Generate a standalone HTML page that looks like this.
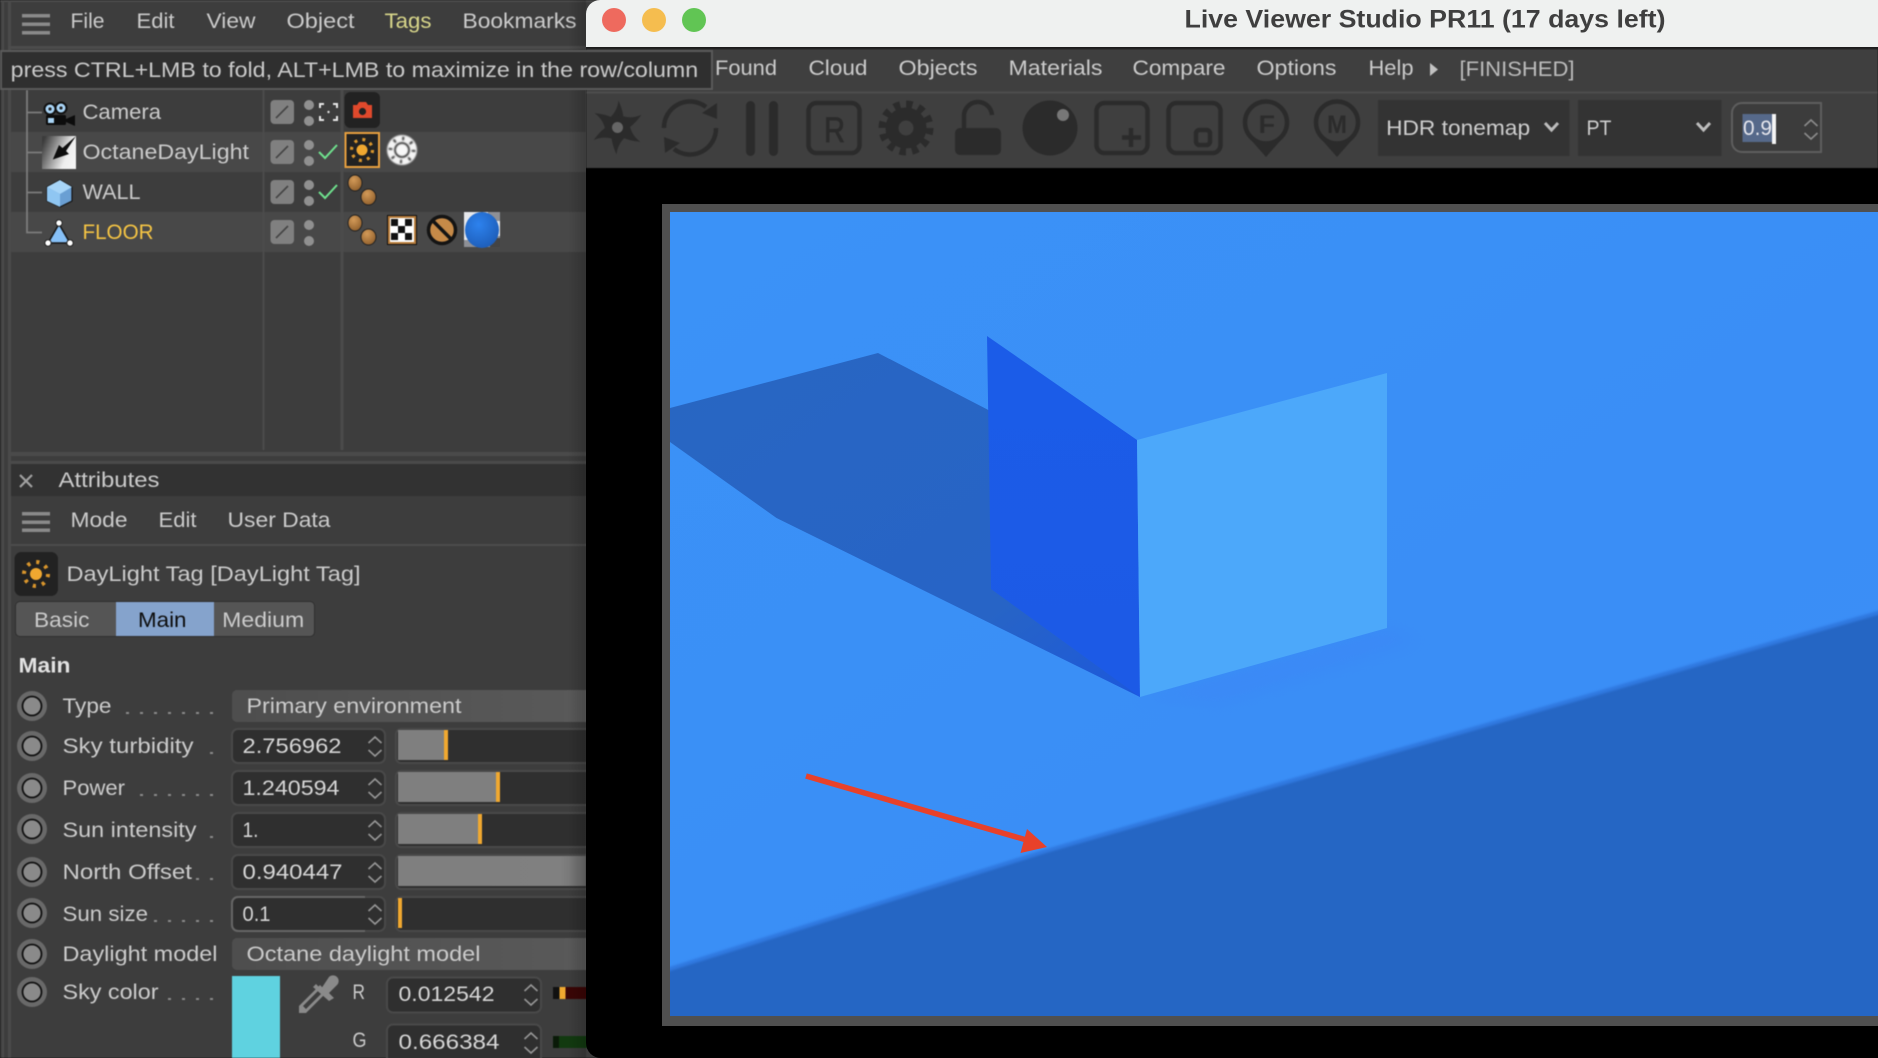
<!DOCTYPE html>
<html><head><meta charset="utf-8"><title>Live Viewer Studio</title>
<style>
html,body{margin:0;padding:0;background:#000;width:1878px;height:1058px;overflow:hidden}
svg{display:block;position:absolute;left:0;top:0}
text{font-family:"Liberation Sans",sans-serif;font-size:21px;fill:#cbcbcb;transform:translateX(-.5px)}
text.n{transform:none}
.b{filter:blur(.4px)}
.v{fill:#d6d6d6}
.sp{fill:none;stroke:#969696;stroke-width:1.6}
.dot{fill:#8a8a8a}
.tick{fill:#f0a830}
.ic{fill:#2b2b2b}
.ics{fill:none;stroke:#2b2b2b;stroke-width:4.5}
</style></head><body>
<svg width="1878" height="1058" viewBox="0 0 1878 1058" xmlns="http://www.w3.org/2000/svg">
<defs>
<linearGradient id="bg" x1="0" y1="0" x2="1" y2="1"><stop offset="0" stop-color="#3b92f7"/><stop offset=".6" stop-color="#3a8ef6"/><stop offset="1" stop-color="#3c8df6"/></linearGradient>
<linearGradient id="dd" x1="0" y1="0" x2="1" y2="0"><stop offset="0" stop-color="#4e4e4e"/><stop offset="1" stop-color="#5a5a5a"/></linearGradient>
<linearGradient id="oc" x1="0" y1=".25" x2="1" y2=".65"><stop offset="0" stop-color="#3c3c3c"/><stop offset=".75" stop-color="#eeeeee"/><stop offset="1" stop-color="#f4f4f4"/></linearGradient>
<linearGradient id="fade" x1="0" y1="0" x2="1" y2="0"><stop offset="0" stop-color="#7f7f7f"/><stop offset=".86" stop-color="#808080"/><stop offset="1" stop-color="#6e6e6e"/></linearGradient>
<linearGradient id="vig" x1="0" y1="0" x2="1" y2="0"><stop offset="0" stop-color="#000" stop-opacity="0"/><stop offset="1" stop-color="#000" stop-opacity=".18"/></linearGradient>
<linearGradient id="wd" x1="0" y1="0" x2="0" y2="1"><stop offset="0" stop-color="#1b5ce8"/><stop offset="1" stop-color="#1c5ae6"/></linearGradient>
<linearGradient id="shd" x1="0" y1="0" x2="1" y2="1"><stop offset="0" stop-color="#2866c2"/><stop offset=".72" stop-color="#2764c6"/><stop offset="1" stop-color="#1c58dc"/></linearGradient>
<radialGradient id="ball" cx=".4" cy=".3" r=".8"><stop offset="0" stop-color="#d39a58"/><stop offset="1" stop-color="#8a5a28"/></radialGradient>
<radialGradient id="bl" cx=".4" cy=".35" r=".75"><stop offset="0" stop-color="#2d82ee"/><stop offset="1" stop-color="#1c5ab4"/></radialGradient>
<clipPath id="vp"><rect x="670" y="212" width="1208" height="804"/></clipPath>
</defs>

<!-- LEFT PANEL -->
<g class="b">
<rect x="0" y="0" width="600" height="1058" fill="#3d3d3d"/>
<rect x="0" y="0" width="600" height="2" fill="#4c4c4c"/>
<rect x="2" y="0" width="2" height="1058" fill="#4a4a4a"/>
<rect x="8" y="0" width="3" height="1058" fill="#4a4a4a"/>
<rect x="8" y="46" width="592" height="3" fill="#4c4c4c"/>
<!-- top menu -->
<rect x="22" y="14" width="28" height="3.5" fill="#8a8a8a"/><rect x="22" y="22.5" width="28" height="3.5" fill="#8a8a8a"/><rect x="22" y="31" width="28" height="3.5" fill="#8a8a8a"/>
<text x="71" y="28" textLength="34" lengthAdjust="spacingAndGlyphs">File</text>
<text x="137" y="28" textLength="38" lengthAdjust="spacingAndGlyphs">Edit</text>
<text x="207" y="28" textLength="49" lengthAdjust="spacingAndGlyphs">View</text>
<text x="287" y="28" textLength="68" lengthAdjust="spacingAndGlyphs">Object</text>
<text x="385" y="28" textLength="47" lengthAdjust="spacingAndGlyphs" style="fill:#d8d68a">Tags</text>
<text x="463" y="28" textLength="114" lengthAdjust="spacingAndGlyphs">Bookmarks</text>

<!-- rows -->
<rect x="11" y="132" width="575" height="40" fill="#484848"/>
<rect x="11" y="212" width="575" height="40" fill="#484848"/>
<rect x="262.5" y="90" width="2" height="360" fill="#4b4b4b"/>
<rect x="340.5" y="90" width="3" height="360" fill="#4b4b4b"/>
<rect x="11" y="452" width="589" height="4" fill="#4a4a4a"/>
<!-- tree lines -->
<path d="M27 90V232.5H42M27 112.5H42M27 152.5H42M27 192.5H42" fill="none" stroke="#7c7c7c" stroke-width="1.8"/>
<!-- camera icon -->
<rect x="46" y="115" width="20" height="10" rx="1.5" fill="#0c0c0c"/><path d="M66 119L75 115V126L66 122Z" fill="#0c0c0c"/>
<circle cx="50" cy="109" r="5.5" fill="#a9d4f5" stroke="#111" stroke-width="2"/><circle cx="61" cy="108" r="5.5" fill="#a9d4f5" stroke="#111" stroke-width="2"/>
<circle cx="50" cy="109" r="1.6" fill="#222"/><circle cx="61" cy="108" r="1.6" fill="#222"/>
<rect x="48" y="118" width="6" height="5" fill="#a9d4f5"/>
<!-- octane light icon -->
<rect x="42" y="136" width="34" height="33" fill="url(#oc)"/>
<path d="M76 136L66 151L69 154L52.8 159.5L59 145L62.5 148Z" fill="#0d0d0d"/>
<!-- cube -->
<path d="M60 180L72 187V201L60 207L47 201V187Z" fill="#6a9fd3" stroke="#151515" stroke-width="1.2"/>
<path d="M60 180L72 187L60 194L47 187Z" fill="#a7d5f8"/><path d="M47 187L60 194V207L47 201Z" fill="#8fc6f2"/>
<!-- floor -->
<path d="M59 224L70 243H48Z" fill="#86c0f7" stroke="#151515" stroke-width="1.5"/>
<circle cx="59" cy="223" r="3.2" fill="#fff" stroke="#222"/><circle cx="48" cy="243" r="3.2" fill="#fff" stroke="#222"/><circle cx="70" cy="243" r="3.2" fill="#fff" stroke="#222"/>
<!-- names -->
<text x="83" y="119" textLength="78.5" lengthAdjust="spacingAndGlyphs">Camera</text>
<text x="83" y="159" textLength="166.5" lengthAdjust="spacingAndGlyphs">OctaneDayLight</text>
<text x="83" y="199" textLength="58" lengthAdjust="spacingAndGlyphs">WALL</text>
<text x="83" y="239" textLength="71" lengthAdjust="spacingAndGlyphs" style="fill:#f6c544">FLOOR</text>
<!-- visibility boxes -->
<g fill="#808080"><rect x="270.5" y="100" width="23.5" height="24" rx="4"/><rect x="270.5" y="140" width="23.5" height="24" rx="4"/><rect x="270.5" y="180" width="23.5" height="24" rx="4"/><rect x="270.5" y="220" width="23.5" height="24" rx="4"/></g>
<path d="M276 118L288 106M276 158L288 146M276 198L288 186M276 238L288 226" stroke="#444" stroke-width="1.6"/>
<g fill="#909090"><circle cx="309" cy="105" r="5"/><circle cx="309" cy="121" r="5"/><circle cx="309" cy="145" r="5"/><circle cx="309" cy="161" r="5"/><circle cx="309" cy="185" r="5"/><circle cx="309" cy="201" r="5"/><circle cx="309" cy="225" r="5"/><circle cx="309" cy="241" r="5"/></g>
<path d="M319 152L325 158L337 145M319 192L325 198L337 185" fill="none" stroke="#6fe28e" stroke-width="2"/>
<path d="M320 108V104H324M333 104H337V108M337 116V120H333M324 120H320V116" fill="none" stroke="#e8e8e8" stroke-width="2"/>
<circle cx="328.5" cy="112" r="1.2" fill="#ddd"/>
<!-- tags -->
<rect x="344.5" y="92" width="35.5" height="36" rx="6" fill="#222"/>
<path d="M353 105H357L359 102H366L368 105H372V118H353Z" fill="#e0492c"/><circle cx="362.5" cy="111.5" r="3.6" fill="#222"/>
<rect x="345.5" y="133" width="33.5" height="34" fill="#222" stroke="#e79f3e" stroke-width="2"/>
<circle cx="362" cy="150" r="5.5" fill="#f0a830"/><circle cx="362" cy="150" r="10.5" fill="none" stroke="#d8952c" stroke-width="3.2" stroke-dasharray="3 5.25"/>
<g style="filter:blur(.7px)"><circle cx="402" cy="150" r="15" fill="#f4f4f4"/><circle cx="402" cy="150" r="11.5" fill="none" stroke="#222" stroke-width="3.6" stroke-dasharray="1.8 7.23"/><circle cx="402" cy="150" r="7" fill="#f8f8f8" stroke="#111" stroke-width="1.5"/></g>
<ellipse cx="355" cy="183" rx="7" ry="8" fill="url(#ball)" stroke="#222"/><ellipse cx="368.5" cy="197" rx="7.5" ry="8" fill="url(#ball)" stroke="#222"/>
<ellipse cx="355" cy="223" rx="7" ry="8" fill="url(#ball)" stroke="#222"/><ellipse cx="368.5" cy="237" rx="7.5" ry="8" fill="url(#ball)" stroke="#222"/>
<rect x="387" y="215" width="30" height="30" fill="#111"/><rect x="389" y="217" width="26" height="26" fill="#fff" stroke="#b87c3a" stroke-width="2"/>
<path d="M391 219h7v7h-7zM405 219h7v7h-7zM398 226h7v7h-7zM391 233h7v7h-7zM405 233h7v7h-7z" fill="#111"/>
<circle cx="442" cy="230" r="13.5" fill="#c68a48" stroke="#141414" stroke-width="3.5"/><path d="M433 221L451 239" stroke="#141414" stroke-width="3.5"/>
<rect x="464" y="212" width="36" height="35" fill="#e6e8ec"/><path d="M488 212h12v9h-12zM464 240h12v7h-12zM488 236h12v11h-12z" fill="#8e9096"/><rect x="490" y="238" width="10" height="9" fill="#444"/>
<ellipse cx="482" cy="230" rx="17" ry="18" fill="url(#bl)"/>

<!-- ATTRIBUTES -->
<rect x="8" y="461" width="592" height="3" fill="#4a4a4a"/>
<rect x="11" y="464" width="580" height="32" fill="#323232"/>
<path d="M20 475L32 487M32 475L20 487" stroke="#a0a0a0" stroke-width="2.2"/>
<text x="59" y="487" textLength="101" lengthAdjust="spacingAndGlyphs">Attributes</text>
<rect x="22" y="512" width="28" height="3.5" fill="#8a8a8a"/><rect x="22" y="520.5" width="28" height="3.5" fill="#8a8a8a"/><rect x="22" y="528.5" width="28" height="3.5" fill="#8a8a8a"/>
<text x="71" y="527" textLength="57" lengthAdjust="spacingAndGlyphs">Mode</text>
<text x="159" y="527" textLength="38" lengthAdjust="spacingAndGlyphs">Edit</text>
<text x="228" y="527" textLength="103" lengthAdjust="spacingAndGlyphs">User Data</text>
<rect x="11" y="544" width="580" height="2" fill="#4c4c4c"/>
<rect x="14.5" y="552" width="43.5" height="44" rx="7" fill="#222"/>
<circle cx="36" cy="574" r="6" fill="#f0a830"/><circle cx="36" cy="574" r="12" fill="none" stroke="#d8952c" stroke-width="4" stroke-dasharray="3.2 6.2"/>
<text x="67" y="581" textLength="294" lengthAdjust="spacingAndGlyphs">DayLight Tag [DayLight Tag]</text>
<!-- tabs -->
<rect x="15" y="601" width="300" height="36" rx="5" fill="#2f2f2f"/>
<rect x="16" y="602" width="298" height="34" rx="4" fill="#555"/>
<rect x="116" y="602" width="98" height="34" fill="#85a3cc"/>
<text x="34.5" y="627" textLength="55.5" lengthAdjust="spacingAndGlyphs">Basic</text>
<text x="138.5" y="627" textLength="48.5" lengthAdjust="spacingAndGlyphs" style="fill:#0d0d0d">Main</text>
<text x="222.7" y="627" textLength="82" lengthAdjust="spacingAndGlyphs">Medium</text>
<text x="19" y="672.5" textLength="52" lengthAdjust="spacingAndGlyphs" style="fill:#e2e2e2;font-weight:700">Main</text>

<!-- radios -->
<g fill="#8a8a8a" stroke="#6b6b6b" stroke-width="0">
<circle cx="32" cy="706" r="15" fill="#696969"/><circle cx="32" cy="706" r="9.5" stroke="#111" stroke-width="1.8"/>
<circle cx="32" cy="746" r="15" fill="#696969"/><circle cx="32" cy="746" r="9.5" stroke="#111" stroke-width="1.8"/>
<circle cx="32" cy="788" r="15" fill="#696969"/><circle cx="32" cy="788" r="9.5" stroke="#111" stroke-width="1.8"/>
<circle cx="32" cy="829" r="15" fill="#696969"/><circle cx="32" cy="829" r="9.5" stroke="#111" stroke-width="1.8"/>
<circle cx="32" cy="872" r="15" fill="#696969"/><circle cx="32" cy="872" r="9.5" stroke="#111" stroke-width="1.8"/>
<circle cx="32" cy="913" r="15" fill="#696969"/><circle cx="32" cy="913" r="9.5" stroke="#111" stroke-width="1.8"/>
<circle cx="32" cy="954" r="15" fill="#696969"/><circle cx="32" cy="954" r="9.5" stroke="#111" stroke-width="1.8"/>
<circle cx="32" cy="992" r="15" fill="#696969"/><circle cx="32" cy="992" r="9.5" stroke="#111" stroke-width="1.8"/>
</g>
<!-- labels -->
<text x="63" y="713" textLength="49" lengthAdjust="spacingAndGlyphs">Type</text>
<text x="63" y="753" textLength="131" lengthAdjust="spacingAndGlyphs">Sky turbidity</text>
<text x="63" y="795" textLength="62.5" lengthAdjust="spacingAndGlyphs">Power</text>
<text x="63" y="837" textLength="134" lengthAdjust="spacingAndGlyphs">Sun intensity</text>
<text x="63" y="879" textLength="129.5" lengthAdjust="spacingAndGlyphs">North Offset</text>
<text x="63" y="921" textLength="85.5" lengthAdjust="spacingAndGlyphs">Sun size</text>
<text x="63" y="961" textLength="155" lengthAdjust="spacingAndGlyphs">Daylight model</text>
<text x="63" y="999" textLength="96" lengthAdjust="spacingAndGlyphs">Sky color</text>
<!-- leader dots -->
<path class="dot" d="M126 712h3v2h-3zM140 712h3v2h-3zM154 712h3v2h-3zM168 712h3v2h-3zM182 712h3v2h-3zM196 712h3v2h-3zM210 712h3v2h-3zM210 752h3v2h-3zM140 794h3v2h-3zM154 794h3v2h-3zM168 794h3v2h-3zM182 794h3v2h-3zM196 794h3v2h-3zM210 794h3v2h-3zM210 836h3v2h-3zM196 878h3v2h-3zM210 878h3v2h-3zM154 920h3v2h-3zM168 920h3v2h-3zM182 920h3v2h-3zM196 920h3v2h-3zM210 920h3v2h-3zM168 998h3v2h-3zM182 998h3v2h-3zM196 998h3v2h-3zM210 998h3v2h-3z"/>
<!-- dropdowns -->
<rect x="232" y="690" width="370" height="32" rx="5" fill="url(#dd)"/>
<text x="247" y="713" textLength="215" lengthAdjust="spacingAndGlyphs">Primary environment</text>
<rect x="232" y="938" width="370" height="32" rx="5" fill="url(#dd)"/>
<text x="247" y="961" textLength="234" lengthAdjust="spacingAndGlyphs">Octane daylight model</text>
<!-- inputs -->
<g fill="#2f2f2f" stroke="#494949" stroke-width="2">
<rect x="232" y="729" width="153" height="34" rx="6"/>
<rect x="232" y="771" width="153" height="34" rx="6"/>
<rect x="232" y="813" width="153" height="34" rx="6"/>
<rect x="232" y="855" width="153" height="34" rx="6"/>
<rect x="232" y="897" width="153" height="34" rx="6"/>
<rect x="387" y="977.5" width="154" height="35" rx="6"/>
<rect x="387" y="1024.5" width="154" height="40" rx="6"/>
</g>
<path d="M365 897H238a6 6 0 0 0-6 6V925a6 6 0 0 0 6 6H365" fill="none" stroke="#666" stroke-width="2"/>
<text class="v" x="243" y="753" textLength="99" lengthAdjust="spacingAndGlyphs">2.756962</text>
<text class="v" x="243" y="795" textLength="97" lengthAdjust="spacingAndGlyphs">1.240594</text>
<text class="v" x="243" y="837" textLength="16" lengthAdjust="spacingAndGlyphs">1.</text>
<text class="v" x="243" y="879" textLength="100" lengthAdjust="spacingAndGlyphs">0.940447</text>
<text class="v" x="243" y="921" textLength="28" lengthAdjust="spacingAndGlyphs">0.1</text>
<text class="v" x="399" y="1001" textLength="96" lengthAdjust="spacingAndGlyphs">0.012542</text>
<text class="v" x="399" y="1049" textLength="101" lengthAdjust="spacingAndGlyphs">0.666384</text>
<path class="sp" d="M368.5 743L375 737L381.5 743M368.5 750L375 756L381.5 750M368.5 785L375 779L381.5 785M368.5 792L375 798L381.5 792M368.5 827L375 821L381.5 827M368.5 834L375 840L381.5 834M368.5 869L375 863L381.5 869M368.5 876L375 882L381.5 876M368.5 911L375 905L381.5 911M368.5 918L375 924L381.5 918M524.5 991L531 985L537.5 991M524.5 999L531 1005L537.5 999M524.5 1039L531 1033L537.5 1039M524.5 1047L531 1053L537.5 1047"/>
<!-- sliders -->
<g fill="#2f2f2f" stroke="#494949" stroke-width="2">
<rect x="396" y="729" width="210" height="34" rx="5"/>
<rect x="396" y="771" width="210" height="34" rx="5"/>
<rect x="396" y="813" width="210" height="34" rx="5"/>
<rect x="396" y="855" width="210" height="34" rx="5"/>
<rect x="396" y="897" width="210" height="34" rx="5"/>
</g>
<rect x="398" y="730" width="48" height="30" fill="#7f7f7f"/><rect class="tick" x="444" y="730" width="4" height="30"/>
<rect x="398" y="772" width="100" height="30" fill="#7f7f7f"/><rect class="tick" x="496" y="772" width="4" height="30"/>
<rect x="398" y="814" width="82" height="30" fill="#7f7f7f"/><rect class="tick" x="478" y="814" width="4" height="30"/>
<rect x="398" y="856" width="188" height="30" fill="url(#fade)"/>
<rect class="tick" x="398" y="898" width="4" height="30"/>
<!-- sky color -->
<rect x="232" y="976" width="48" height="82" fill="#5fd2e0"/>
<path d="M299 1006L320 985L327 992L306 1013H299ZM303 1006L320 989L323 992L306 1009Z" fill="#8a8a8a" fill-rule="evenodd"/>
<path d="M316 984L321 989L329 977A4 4 0 0 1 337 985L329 993L334 998L329 1001L313 987Z" fill="#8a8a8a"/>
<text x="353" y="999" textLength="12.5" lengthAdjust="spacingAndGlyphs">R</text>
<text x="353" y="1047" textLength="14" lengthAdjust="spacingAndGlyphs">G</text>
<rect x="553" y="987" width="40" height="12" fill="#3a0505"/><rect x="553" y="987" width="7" height="12" fill="#111"/><rect class="tick" x="559.5" y="987" width="6" height="12"/>
<rect x="553" y="1036" width="40" height="12" fill="#123a10"/><rect x="553" y="1036" width="6" height="12" fill="#0a1a08"/>
<rect x="568" y="0" width="18" height="1058" fill="url(#vig)"/>
</g>

<!-- WINDOW -->
<path d="M586 14A14 14 0 0 1 600 0H1878V1058H601A15 15 0 0 1 586 1043Z" fill="#000"/>
<path d="M586 48V14A14 14 0 0 1 600 0H1878V48Z" fill="#eff1f0"/>
<rect x="586" y="47" width="1292" height="2" fill="#1c1c1c"/>
<circle cx="614" cy="20" r="12" fill="#ee6a5e"/><circle cx="654" cy="20" r="12" fill="#f5bd4f"/><circle cx="694" cy="20" r="12" fill="#61c554"/>
<text class="n" x="1184.5" y="27.5" textLength="481" lengthAdjust="spacingAndGlyphs" style="font-size:25px;font-weight:700;fill:#3f3f3f">Live Viewer Studio PR11 (17 days left)</text>
<g class="b">
<rect x="586" y="49" width="1292" height="119" fill="#3f3f3f"/>
<rect x="586" y="91.5" width="1292" height="2" fill="#4d4d4d"/>
<text x="715.5" y="75" textLength="62" lengthAdjust="spacingAndGlyphs">Found</text>
<text x="809" y="75" textLength="59" lengthAdjust="spacingAndGlyphs">Cloud</text>
<text x="899" y="75" textLength="79" lengthAdjust="spacingAndGlyphs">Objects</text>
<text x="1009" y="75" textLength="94" lengthAdjust="spacingAndGlyphs">Materials</text>
<text x="1133" y="75" textLength="93" lengthAdjust="spacingAndGlyphs">Compare</text>
<text x="1257" y="75" textLength="80" lengthAdjust="spacingAndGlyphs">Options</text>
<text x="1369" y="75" textLength="45" lengthAdjust="spacingAndGlyphs">Help</text>
<path d="M1430 63L1438 69.5L1430 76Z" fill="#c2c2c2"/>
<text x="1460" y="76" textLength="115" lengthAdjust="spacingAndGlyphs" style="fill:#bcbcbc">[FINISHED]</text>

<!-- toolbar icons -->
<g transform="translate(617.5 127.5)" class="ic">
<path d="M1 -27C0 -19 -3 -13 -11 -7L6 -8C6 -14 4 -20 1 -27Z"/>
<path transform="rotate(60)" d="M1 -27C0 -19 -3 -13 -11 -7L6 -8C6 -14 4 -20 1 -27Z"/>
<path transform="rotate(120)" d="M1 -27C0 -19 -3 -13 -11 -7L6 -8C6 -14 4 -20 1 -27Z"/>
<path transform="rotate(180)" d="M1 -27C0 -19 -3 -13 -11 -7L6 -8C6 -14 4 -20 1 -27Z"/>
<path transform="rotate(240)" d="M1 -27C0 -19 -3 -13 -11 -7L6 -8C6 -14 4 -20 1 -27Z"/>
<path transform="rotate(300)" d="M1 -27C0 -19 -3 -13 -11 -7L6 -8C6 -14 4 -20 1 -27Z"/>
<circle r="9.5"/>
<circle r="5.5" fill="#666"/>
</g>
<path class="ics" d="M664 128A26 26 0 0 1 706 107" stroke-width="3.5"/>
<path class="ics" d="M716 128A26 26 0 0 1 674 149" stroke-width="3.5"/>
<path class="ic" d="M717 103L717 119L702 113ZM665 153L664 137L680 143Z"/>
<rect class="ic" x="746" y="101" width="9" height="55" rx="4.5"/><rect class="ic" x="769" y="101" width="9" height="55" rx="4.5"/>
<rect class="ics" x="808.5" y="103" width="51" height="50" rx="8" stroke-width="3.5"/>
<text class="n" x="824" y="142" textLength="21" lengthAdjust="spacingAndGlyphs" style="font-size:35px;fill:#2b2b2b;stroke:#2b2b2b;stroke-width:.8px">R</text>
<circle cx="906" cy="128" r="14" fill="none" stroke="#2b2b2b" stroke-width="13"/>
<circle cx="906" cy="128" r="23.5" fill="none" stroke="#2b2b2b" stroke-width="8" stroke-dasharray="6.3 6"/>
<rect class="ic" x="955" y="128" width="46" height="27" rx="5"/>
<path class="ics" d="M964 130V117A14 14 0 0 1 992 115" stroke-width="4"/>
<circle class="ic" cx="1050" cy="128" r="27.5"/><circle cx="1063" cy="115" r="6" fill="#777"/>
<rect class="ics" x="1096.5" y="103" width="51" height="50" rx="8" stroke-width="3.5"/>
<path class="ics" d="M1131 128V147M1122 137.5H1141" stroke-width="3"/>
<rect class="ics" x="1168.5" y="103" width="52" height="50" rx="8" stroke-width="3.5"/>
<rect class="ics" x="1196" y="130" width="14" height="15" rx="3.5" stroke-width="3.5"/>
<circle class="ics" cx="1266" cy="122.5" r="21" stroke-width="4.5"/><path class="ic" d="M1251 140L1266 157L1281 140Q1266 148 1251 140Z"/>
<text class="n" x="1258.5" y="133" textLength="16.5" lengthAdjust="spacingAndGlyphs" style="font-size:25px;font-weight:700;fill:#2b2b2b">F</text>
<circle class="ics" cx="1337" cy="122.5" r="21" stroke-width="4.5"/><path class="ic" d="M1322 140L1337 157L1352 140Q1337 148 1322 140Z"/>
<text class="n" x="1327" y="133" textLength="20" lengthAdjust="spacingAndGlyphs" style="font-size:25px;font-weight:700;fill:#2b2b2b">M</text>
<!-- selects -->
<rect x="1378" y="100" width="191.5" height="56" fill="#333"/>
<text x="1386.6" y="135" textLength="144" lengthAdjust="spacingAndGlyphs" style="fill:#cecece">HDR tonemap</text>
<path d="M1545 123L1551.5 130L1558 123" fill="none" stroke="#bdbdbd" stroke-width="3"/>
<rect x="1578" y="100" width="143.5" height="56" fill="#333"/>
<text x="1587" y="135" textLength="25" lengthAdjust="spacingAndGlyphs" style="fill:#cecece">PT</text>
<path d="M1697 123L1703.5 130L1710 123" fill="none" stroke="#bdbdbd" stroke-width="3"/>
<path d="M1821 103H1742A10 10 0 0 0 1732 113V142A10 10 0 0 0 1742 152H1821Z" fill="#3c3c3c" stroke="#5e5e5e" stroke-width="2"/>
<rect x="1742.5" y="114" width="29.5" height="28" fill="#56698a"/>
<text class="n" x="1743" y="135" textLength="29" lengthAdjust="spacingAndGlyphs" style="fill:#e8e8ee">0.9</text>
<rect x="1772" y="114" width="4" height="30" fill="#f4f4f4"/>
<path d="M1804.5 126L1811 120L1817.5 126M1804.5 133L1811 139L1817.5 133" fill="none" stroke="#8c8c8c" stroke-width="1.6"/>
</g>

<!-- VIEWPORT -->
<rect x="662" y="204" width="1216" height="822" fill="#505050"/>
<rect x="670" y="212" width="1208" height="804" fill="url(#bg)"/>
<g clip-path="url(#vp)">
<path d="M1140 697L1387 628L1420 640L1220 705Z" fill="#3d84f7" opacity=".45" style="filter:blur(8px)"/>
<path d="M660 972L1046 851L1888 610V1030H660Z" fill="#2566c4" stroke="#3079e0" stroke-width="4" style="filter:blur(1px)"/>
</g>
<!-- shadow -->
<path d="M670 408L878 353L1000 416L1140 697L776.5 518L670 442Z" fill="url(#shd)"/>
<!-- wall -->
<path d="M987 336L1137 440L1140 697L991 589Z" fill="url(#wd)"/>
<path d="M1137 440L1387 373V628L1140 697Z" fill="#4ca8fa"/>
<!-- arrow -->
<path d="M806 776L1030 841" stroke="#e8412a" stroke-width="5.5" fill="none"/>
<path d="M1047 847L1027 829L1020.5 853Z" fill="#e8412a"/>

<!-- TOOLTIP -->
<g class="b">
<rect x="1" y="51" width="711" height="38" fill="#2f2f2f" stroke="#5a5a5a" stroke-width="2"/>
<text class="n" x="10.7" y="77" textLength="687.5" lengthAdjust="spacingAndGlyphs" style="fill:#cacaca">press CTRL+LMB to fold, ALT+LMB to maximize in the row/column</text>
</g>
</svg>
</body></html>
